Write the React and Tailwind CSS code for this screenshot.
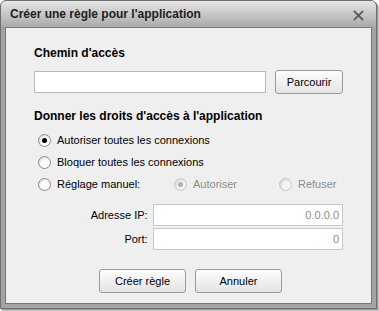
import React, { useState } from 'react';

const Radio = ({ checked, disabled, onClick }) => (
  <span
    onClick={onClick}
    className={`flex items-center justify-center w-[13px] h-[13px] rounded-full border ${
      disabled ? 'border-[#c8c8c8] bg-[#f4f4f4]' : 'border-[#8a8a8a] bg-white'
    } shadow-[inset_1px_1px_2px_rgba(0,0,0,0.15)]`}
  >
    {checked && (
      <span className={`w-[5px] h-[5px] rounded-full ${disabled ? 'bg-[#b0b0b0]' : 'bg-black'}`} />
    )}
  </span>
);

const Button = ({ children, className = '' }) => (
  <button
    className={`h-[24px] rounded-[3px] border border-[#9a9a9a] bg-gradient-to-b from-[#fdfdfd] to-[#e4e4e4] text-[11px] text-black ${className}`}
  >
    {children}
  </button>
);

const App = () => {
  const [mode, setMode] = useState('allow');

  return (
    <div className="w-[379px] h-[311px] bg-white font-['Liberation_Sans',Arial,sans-serif] text-[11px] text-black">
      <div className="w-[377px] h-[309px] flex flex-col rounded-t-[6px] border border-[#6e6e6e] bg-[#a4a4a4] shadow-[1px_1px_0_#9a9a9a,2px_2px_0_#c8c8c8]">
        {/* title bar */}
        <div className="h-[26px] flex items-center justify-between pl-[9px] pr-[12px] rounded-t-[5px] bg-gradient-to-b from-[#e6e6e6] to-[#a9a9a9]">
          <span className="font-bold text-[12px] text-[#1e1e1e]">Créer une règle pour l'application</span>
          <svg width="11" height="11" viewBox="0 0 11 11" className="mt-[2px]">
            <path d="M1.5 1.5 L9.5 9.5 M9.5 1.5 L1.5 9.5" stroke="#5e5e5e" strokeWidth="1.9" strokeLinecap="square" />
          </svg>
        </div>

        {/* body */}
        <div className="flex-1 mx-[4px] mb-[4px] border border-[#777777] bg-[#efefef] px-[28px] pt-[18px]">
          <div className="font-bold text-[12px] h-[14px] leading-[14px]">Chemin d'accès</div>

          <div className="flex items-center gap-[9px] mt-[10px]">
            <input className="w-[232px] h-[22px] border border-[#b8b8b8] bg-white outline-none px-1" />
            <Button className="w-[68px] h-[23px] border-[#6f84b4]">Parcourir</Button>
          </div>

          <div className="font-bold text-[12px] h-[14px] leading-[14px] mt-[15px]">Donner les droits d'accès à l'application</div>

          <div className="flex flex-col gap-[8px] mt-[10px] pl-[4px]">
            <label className="flex items-center gap-[6px] h-[14px]">
              <Radio checked={mode === 'allow'} onClick={() => setMode('allow')} />
              <span>Autoriser toutes les connexions</span>
            </label>
            <label className="flex items-center gap-[6px] h-[14px]">
              <Radio checked={mode === 'block'} onClick={() => setMode('block')} />
              <span>Bloquer toutes les connexions</span>
            </label>
            <div className="flex items-center h-[14px]">
              <label className="flex items-center gap-[6px] w-[136px]">
                <Radio checked={mode === 'manual'} onClick={() => setMode('manual')} />
                <span>Réglage manuel:</span>
              </label>
              <label className="flex items-center gap-[6px] w-[105px] text-[#8c8c8c]">
                <Radio checked disabled />
                <span>Autoriser</span>
              </label>
              <label className="flex items-center gap-[6px] text-[#8c8c8c]">
                <Radio disabled />
                <span>Refuser</span>
              </label>
            </div>
          </div>

          <div className="flex flex-col gap-[2px] mt-[13px]">
            <div className="flex items-center">
              <span className="w-[119px] text-right pr-[5px]">Adresse IP:</span>
              <input
                disabled
                defaultValue="0.0.0.0"
                className="w-[191px] h-[22px] border border-[#c8c8c8] bg-white text-right px-[3px] text-[#8c8c8c] outline-none"
              />
            </div>
            <div className="flex items-center">
              <span className="w-[119px] text-right pr-[5px]">Port:</span>
              <input
                disabled
                defaultValue="0"
                className="w-[191px] h-[22px] border border-[#c8c8c8] bg-white text-right px-[3px] text-[#8c8c8c] outline-none"
              />
            </div>
          </div>

          <div className="flex justify-center gap-[9px] mt-[19px] pl-[4px]">
            <Button className="w-[87px]">Créer règle</Button>
            <Button className="w-[87px]">Annuler</Button>
          </div>
        </div>
      </div>
    </div>
  );
};

export default App;
